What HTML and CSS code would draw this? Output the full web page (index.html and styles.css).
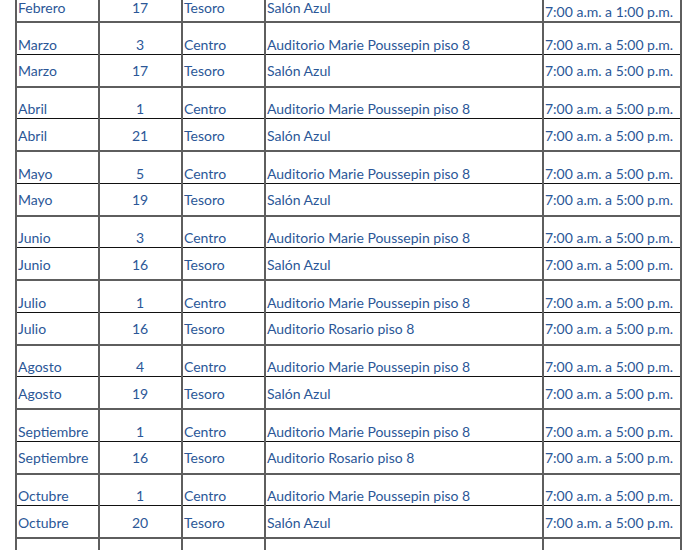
FILE: index.html
```html
<!DOCTYPE html>
<html lang="es">
<head>
<meta charset="utf-8">
<link rel="stylesheet" href="styles.css">
<title>Calendario</title>
</head>
<body>
<div class="sheet">
<table class="agenda">
<colgroup>
<col class="c-mes"><col class="c-dia"><col class="c-sede"><col class="c-lugar"><col class="c-hora">
</colgroup>
<tbody>
<tr class="tesoro first"><td>Febrero</td><td class="num">17</td><td>Tesoro</td><td>Salón Azul</td><td class="hora bottom">7:00 a.m. a 1:00 p.m.</td></tr>
<tr class="centro"><td>Marzo</td><td class="num">3</td><td>Centro</td><td>Auditorio Marie Poussepin piso 8</td><td class="hora">7:00 a.m. a 5:00 p.m.</td></tr>
<tr class="tesoro"><td>Marzo</td><td class="num">17</td><td>Tesoro</td><td>Salón Azul</td><td class="hora">7:00 a.m. a 5:00 p.m.</td></tr>
<tr class="centro"><td>Abril</td><td class="num">1</td><td>Centro</td><td>Auditorio Marie Poussepin piso 8</td><td class="hora">7:00 a.m. a 5:00 p.m.</td></tr>
<tr class="tesoro"><td>Abril</td><td class="num">21</td><td>Tesoro</td><td>Salón Azul</td><td class="hora">7:00 a.m. a 5:00 p.m.</td></tr>
<tr class="centro"><td>Mayo</td><td class="num">5</td><td>Centro</td><td>Auditorio Marie Poussepin piso 8</td><td class="hora">7:00 a.m. a 5:00 p.m.</td></tr>
<tr class="tesoro"><td>Mayo</td><td class="num">19</td><td>Tesoro</td><td>Salón Azul</td><td class="hora">7:00 a.m. a 5:00 p.m.</td></tr>
<tr class="centro"><td>Junio</td><td class="num">3</td><td>Centro</td><td>Auditorio Marie Poussepin piso 8</td><td class="hora">7:00 a.m. a 5:00 p.m.</td></tr>
<tr class="tesoro"><td>Junio</td><td class="num">16</td><td>Tesoro</td><td>Salón Azul</td><td class="hora">7:00 a.m. a 5:00 p.m.</td></tr>
<tr class="centro"><td>Julio</td><td class="num">1</td><td>Centro</td><td>Auditorio Marie Poussepin piso 8</td><td class="hora">7:00 a.m. a 5:00 p.m.</td></tr>
<tr class="tesoro"><td>Julio</td><td class="num">16</td><td>Tesoro</td><td>Auditorio Rosario piso 8</td><td class="hora">7:00 a.m. a 5:00 p.m.</td></tr>
<tr class="centro"><td>Agosto</td><td class="num">4</td><td>Centro</td><td>Auditorio Marie Poussepin piso 8</td><td class="hora">7:00 a.m. a 5:00 p.m.</td></tr>
<tr class="tesoro"><td>Agosto</td><td class="num">19</td><td>Tesoro</td><td>Salón Azul</td><td class="hora">7:00 a.m. a 5:00 p.m.</td></tr>
<tr class="centro"><td>Septiembre</td><td class="num">1</td><td>Centro</td><td>Auditorio Marie Poussepin piso 8</td><td class="hora">7:00 a.m. a 5:00 p.m.</td></tr>
<tr class="tesoro"><td>Septiembre</td><td class="num">16</td><td>Tesoro</td><td>Auditorio Rosario piso 8</td><td class="hora">7:00 a.m. a 5:00 p.m.</td></tr>
<tr class="centro"><td>Octubre</td><td class="num">1</td><td>Centro</td><td>Auditorio Marie Poussepin piso 8</td><td class="hora">7:00 a.m. a 5:00 p.m.</td></tr>
<tr class="tesoro"><td>Octubre</td><td class="num">20</td><td>Tesoro</td><td>Salón Azul</td><td class="hora">7:00 a.m. a 5:00 p.m.</td></tr>
<tr class="centro"><td></td><td class="num"></td><td></td><td></td><td class="hora"></td></tr>
</tbody>
</table>
</div>
</body>
</html>
```

FILE: styles.css
```css
html, body {
  margin: 0;
  padding: 0;
  background: #ffffff;
  overflow: hidden;
}

.sheet {
  padding-left: 15px;
}

.agenda {
  border-collapse: collapse;
  table-layout: fixed;
  width: 667px;
  font-family: Lato, "Open Sans", sans-serif;
  font-size: 14px;
  color: #2b5797;
}

.c-mes { width: 83px; }
.c-dia { width: 83px; }
.c-sede { width: 83px; }
.c-lugar { width: 278px; }
.c-hora { width: 138px; }

.agenda td {
  border-left: 2px solid #5e5e5e;
  border-right: 2px solid #5e5e5e;
  padding: 0 2px 0 1px;
  white-space: nowrap;
  overflow: hidden;
  line-height: 18px;
}

.agenda tr {
  height: 32.25px;
}

.agenda tr.centro td {
  border-top: 2px solid #5e5e5e;
  border-bottom: 1px solid #111111;
  vertical-align: bottom;
}

.agenda tr.tesoro td {
  vertical-align: middle;
  padding-top: 2px;
}

.agenda td.num {
  text-align: center;
}

.agenda tr.tesoro.first {
  height: 22px;
}

.agenda tr.tesoro.first td {
  vertical-align: top;
  line-height: 16px;
  padding-top: 0;
  padding-bottom: 0;
  overflow: visible;
}

.agenda tr.tesoro.first td.bottom {
  vertical-align: bottom;
  line-height: 16px;
  padding-bottom: 1px;
}
```
